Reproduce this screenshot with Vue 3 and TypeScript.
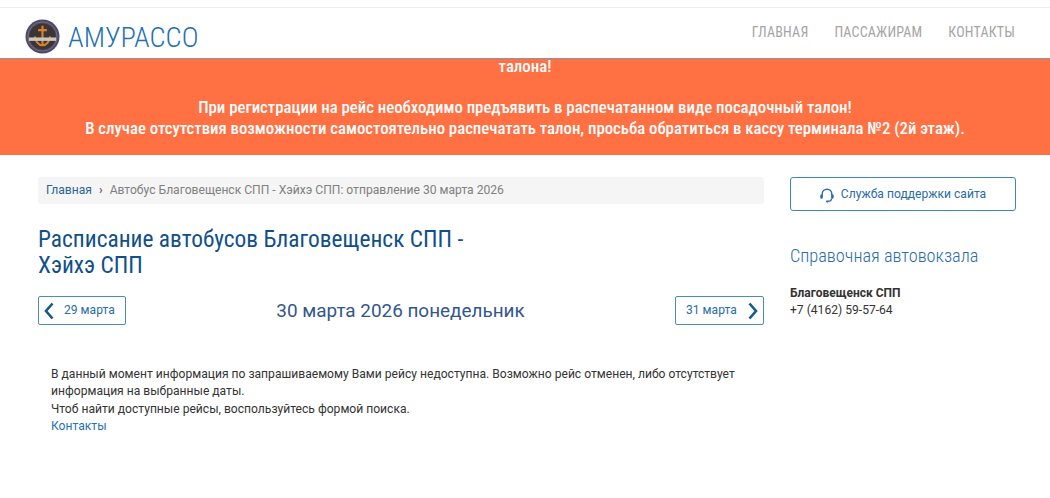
<script setup lang="ts">
const navItems: string[] = ['Главная', 'Пассажирам', 'Контакты']
</script>

<template>
  <div class="page">
    <header class="header">
      <div class="brand">
        <svg class="logo" width="35" height="35" viewBox="0 0 36 36" aria-hidden="true">
          <circle cx="18" cy="18" r="17.5" fill="#4a4a78" />
          <circle cx="18" cy="18" r="15" fill="none" stroke="#8d6a4a" stroke-width="1" />
          <circle cx="18" cy="18" r="13.500" fill="#3a3636" />
          <path d="M18 7v20M13.500 11.500h9M10 18c1 5 4 9 8 9s7-4 8-9" fill="none" stroke="#d9812f" stroke-width="2.200" />
          <rect x="4" y="19" width="28" height="3.500" fill="#c9c6c0" />
        </svg>
        <span class="brand-name">АМУРАССО</span>
      </div>
      <nav class="nav">
        <a v-for="item in navItems" :key="item" class="nav-link">{{ item }}</a>
      </nav>
    </header>

    <section class="notice">
      <p class="notice-cut">талона!</p>
      <p class="notice-line">При регистрации на рейс необходимо предъявить в распечатанном виде посадочный талон!</p>
      <p>В случае отсутствия возможности самостоятельно распечатать талон, просьба обратиться в кассу терминала №2 (2й этаж).</p>
    </section>

    <div class="content">
      <main class="main">
        <div class="crumbs">
          <a class="crumb-link">Главная</a>
          <span class="crumb-sep">›</span>
          <span>Автобус Благовещенск СПП - Хэйхэ СПП: отправление 30 марта 2026</span>
        </div>
        <h1 class="title">Расписание автобусов Благовещенск СПП -<br />Хэйхэ СПП</h1>
        <div class="dates">
          <a class="day-btn">
            <svg width="13" height="20" viewBox="0 0 13 20" aria-hidden="true"><path d="M10.500 2.500 4 10l6.500 7.500" fill="none" stroke="#14598f" stroke-width="2.600" /></svg>
            <span>29 марта</span>
          </a>
          <div class="today">30 марта 2026 понедельник</div>
          <a class="day-btn day-btn--next">
            <span>31 марта</span>
            <svg width="13" height="20" viewBox="0 0 13 20" aria-hidden="true"><path d="M2.500 2.500 9 10l-6.500 7.500" fill="none" stroke="#14598f" stroke-width="2.600" /></svg>
          </a>
        </div>
        <div class="message">
          В данный момент информация по запрашиваемому Вами рейсу недоступна. Возможно рейс отменен, либо отсутствует информация на выбранные даты.<br />
          Чтоб найти доступные рейсы, воспользуйтесь формой поиска.<br />
          <a class="msg-link">Контакты</a>
        </div>
      </main>

      <aside class="side">
        <a class="support">
          <svg width="14" height="15" viewBox="0 0 14 15" aria-hidden="true">
            <path d="M2.200 7V6a4.800 4.800 0 0 1 9.600 0v1M11.500 10.500c0 1.800-1.500 2.900-3.800 2.900" fill="none" stroke="#2a6ca6" stroke-width="1.400" />
            <rect x="0.300" y="6.500" width="2.600" height="4.200" rx="1.100" fill="#2a6ca6" />
            <rect x="11.100" y="6.500" width="2.600" height="4.200" rx="1.100" fill="#2a6ca6" />
            <rect x="6" y="12.600" width="2.600" height="1.800" rx="0.800" fill="#2a6ca6" />
          </svg>
          <span>Служба поддержки сайта</span>
        </a>
        <h2 class="side-title">Справочная автовокзала</h2>
        <div class="station">Благовещенск СПП</div>
        <div class="phone">+7 (4162) 59-57-64</div>
      </aside>
    </div>
  </div>
</template>

<style>
body {
  background: #fff;
}
</style>

<style scoped>
.page {
  width: 1050px;
  height: 498px;
  overflow: hidden;
  font-family: Roboto, "Liberation Sans", sans-serif;
  font-size: 12.1px;
  line-height: 17.4px;
  color: #333;
}

.header {
  margin-top: 7px;
  height: 52px;
  box-sizing: border-box;
  border-top: 1px solid #eee;
  border-bottom: 1px solid #8a94a6;
  display: flex;
  align-items: center;
  justify-content: space-between;
  padding: 0 35px 0 25px;
}

.brand {
  display: flex;
  align-items: center;
  gap: 8px;
  margin-top: 6px;
}

.brand-name {
  padding-top: 4px;
  font-size: 28.500px;
  font-weight: 300;
  font-stretch: 75%;
  line-height: 36px;
  color: #1f72b4;
}

.nav {
  display: flex;
  gap: 26px;
}

.nav-link {
  font-size: 14px;
  font-weight: 400;
  font-stretch: 75%;
  letter-spacing: 0.2px;
  text-transform: uppercase;
  color: #a5a5a5;
}

.notice {
  height: 96px;
  background: #ff7043;
  color: #fff;
  font-size: 16.800px;
  font-weight: 500;
  font-stretch: 75%;
  line-height: 21px;
  text-align: center;
}

.notice p {
  margin: 0;
}

.notice .notice-cut {
  line-height: 15px;
}

.notice .notice-line {
  margin-top: 23px;
}

.content {
  display: flex;
  padding: 22px 34px 0 38px;
  gap: 26px;
}

.main {
  width: 726px;
  flex: none;
}

.crumbs {
  height: 27px;
  box-sizing: border-box;
  display: flex;
  align-items: center;
  padding: 1px 8px 0;
  border-radius: 3px;
  background: #f5f5f5;
  color: #808080;
}

.crumb-link {
  color: #2a6496;
}

.crumb-sep {
  margin: 0 7px;
  color: #666;
  font-weight: 700;
}

.title {
  margin: 22px 0 0;
  font-size: 23.400px;
  font-weight: 400;
  font-stretch: 75%;
  line-height: 26px;
  color: #10508a;
}

.dates {
  margin-top: 18px;
  display: flex;
  align-items: center;
  justify-content: space-between;
}

.day-btn {
  height: 29px;
  width: 88px;
  box-sizing: border-box;
  display: flex;
  align-items: center;
  gap: 9px;
  padding: 0 6px 0 3px;
  border: 1px solid #4a8cc0;
  border-radius: 2px;
  color: #2a6ca6;
}

.day-btn--next {
  width: 89px;
  padding: 0 3px 0 10px;
  justify-content: space-between;
  gap: 0;
}

.today {
  font-size: 18.900px;
  color: #34568b;
}

.message {
  margin-top: 41px;
  padding: 0 13px;
  color: #333;
}

.msg-link {
  color: #2472b3;
}

.side {
  flex: 1;
}

.support {
  height: 34px;
  box-sizing: border-box;
  display: flex;
  align-items: center;
  justify-content: center;
  gap: 7px;
  padding-top: 2px;
  border: 1px solid #3f86bd;
  border-radius: 3px;
  color: #2a6ca6;
}

.side-title {
  margin: 34px 0 0;
  font-size: 18.300px;
  font-weight: 300;
  font-stretch: 75%;
  line-height: 22px;
  color: #2a6ca6;
}

.station {
  margin-top: 18px;
  font-size: 12px;
  font-weight: 700;
  color: #333;
}

.phone {
  color: #333;
}
</style>
